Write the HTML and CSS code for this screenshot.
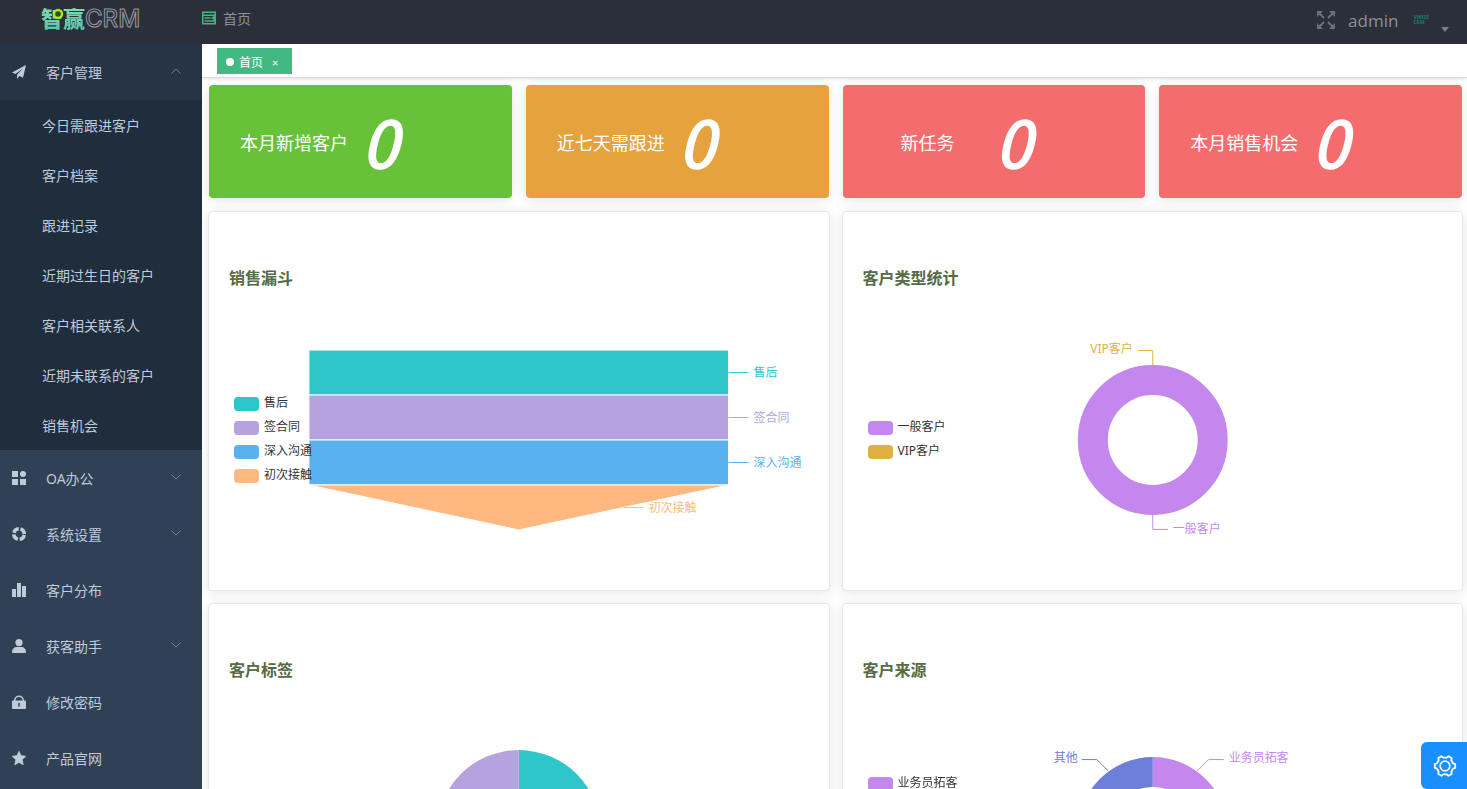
FILE: index.html
```html
<!DOCTYPE html>
<html lang="zh-CN">
<head>
<meta charset="utf-8">
<title>智赢CRM</title>
<link rel="stylesheet" href="styles.css">
</head>
<body>
<div class="app">
  <header class="topbar">
    <a class="logo" href="#"><span class="logo-name">智赢</span><span class="logo-crm">CRM</span>
      <svg class="logo-ring" viewBox="0 0 12 12"><circle cx="6" cy="6" r="4" fill="#2b4a2c" stroke="#a4ec1a" stroke-width="2.400"/></svg>
    </a>
    <nav class="crumbs">
      <button class="icon-btn" aria-label="折叠菜单">
        <svg width="14" height="14" viewBox="0 0 14 14" fill="none" stroke="#42b983" stroke-width="1.500"><path d="M.8 1.300h12.400v11.400H.8zM1 4.300h12M2.500 7h6M2.500 10h12M2.500 4.300h11"/><path d="M12.500 5 9.500 7l3 2z" fill="#42b983" stroke-width=".6"/></svg>
      </button>
      <a class="crumb" href="#">首页</a>
    </nav>
    <div class="user">
      <button class="icon-btn" aria-label="全屏">
        <svg width="20" height="20" viewBox="0 0 20 20" fill="#6d7077" stroke="#6d7077" stroke-width="2"><path d="M3 3l5 5M17 3l-5 5M3 17l5-5M17 17l-5-5"/><path stroke="none" d="M1 1h6L1 7zM19 1h-6l6 6zM1 19h6l-6-6zM19 19h-6l6-6z"/></svg>
      </button>
      <span class="user-name">admin</span>
      <span class="avatar"><b>VWISE</b><b>CRM</b></span>
      <svg class="caret" width="8" height="5" viewBox="0 0 8 5" fill="#7b7e85"><path d="M0 0h8L4 5z"/></svg>
    </div>
  </header>

  <aside class="sidebar">
    <a class="item item-open" href="#">
      <svg class="ico" viewBox="0 0 14 14"><path d="M14 0 0 7.600l3.600 1.500L11 3.200 5 9.800V14l2.300-2.900 3.700 1.600z"/></svg>
      <span>客户管理</span>
      <svg class="chev" viewBox="0 0 12 8"><path d="M1.500 6.500 6 2l4.500 4.500"/></svg>
    </a>
    <div class="submenu">
      <a href="#">今日需跟进客户</a>
      <a href="#">客户档案</a>
      <a href="#">跟进记录</a>
      <a href="#">近期过生日的客户</a>
      <a href="#">客户相关联系人</a>
      <a href="#">近期未联系的客户</a>
      <a href="#">销售机会</a>
    </div>
    <a class="item" href="#">
      <svg class="ico" viewBox="0 0 14 14"><path d="M0 0h6v6H0zM0 8h6v6H0zM8 8h6v6H8z"/><circle cx="11" cy="3" r="3"/></svg>
      <span>OA办公</span>
      <svg class="chev" viewBox="0 0 12 8"><path d="M1.500 1.500 6 6l4.500-4.500"/></svg>
    </a>
    <a class="item" href="#">
      <svg class="ico" viewBox="0 0 14 14"><circle cx="7" cy="7" r="5.300" fill="none" stroke="#bfcbd9" stroke-width="3.400" stroke-dasharray="6.530 1.800" stroke-dashoffset="-.9"/></svg>
      <span>系统设置</span>
      <svg class="chev" viewBox="0 0 12 8"><path d="M1.500 1.500 6 6l4.500-4.500"/></svg>
    </a>
    <a class="item" href="#">
      <svg class="ico" viewBox="0 0 14 14"><path d="M0 6h4v8H0zM5 0h4v14H5zM10 3h4v11h-4z"/></svg>
      <span>客户分布</span>
    </a>
    <a class="item" href="#">
      <svg class="ico" viewBox="0 0 14 14"><circle cx="7" cy="3.600" r="3.600"/><path d="M0 13c0-3 2-5 4.500-5h5c2.500 0 4.500 2 4.500 5 0 .7-.3 1-1 1H1c-.7 0-1-.3-1-1z"/></svg>
      <span>获客助手</span>
      <svg class="chev" viewBox="0 0 12 8"><path d="M1.500 1.500 6 6l4.500-4.500"/></svg>
    </a>
    <a class="item" href="#">
      <svg class="ico" viewBox="0 0 14 14"><path fill-rule="evenodd" d="M2 5.500a5 5 0 0 1 10 0h.8c.7 0 1.200.5 1.200 1.200v6c0 .8-.5 1.300-1.200 1.300H1.200C.5 14 0 13.500 0 12.700v-6c0-.7.500-1.200 1.200-1.200zm1.500 0h7a3.500 3.500 0 0 0-7 0zM6.300 8v3.500h1.500V8z"/></svg>
      <span>修改密码</span>
    </a>
    <a class="item" href="#">
      <svg class="ico" viewBox="0 0 14 14"><path d="m7 0 2.100 4.500 4.900.7-3.600 3.400.9 5.400L7 11.500 2.700 14l.9-5.400L0 5.200l4.900-.7z" stroke="#bfcbd9" stroke-width=".5" stroke-linejoin="round"/></svg>
      <span>产品官网</span>
    </a>
  </aside>

  <main class="main">
    <div class="tabs">
      <a class="tab" href="#"><i class="dot"></i>首页<span class="close">×</span></a>
    </div>

    <section class="stats">
      <div class="stat stat-green"><span class="stat-label">本月新增客户</span><em class="stat-num">0</em></div>
      <div class="stat stat-orange"><span class="stat-label">近七天需跟进</span><em class="stat-num">0</em></div>
      <div class="stat stat-red"><span class="stat-label">新任务</span><em class="stat-num">0</em></div>
      <div class="stat stat-red"><span class="stat-label">本月销售机会</span><em class="stat-num">0</em></div>
    </section>

    <section class="panels">
      <article class="panel">
        <h2>销售漏斗</h2>
        <div class="chart">
          <svg class="plot" viewBox="0 0 620 300">
            <g stroke="#fff">
              <path fill="#2ec7c9" d="M100 60h420v45H100z"/>
              <path fill="#b6a2de" d="M100 105h420v45H100z"/>
              <path fill="#5ab1ef" d="M100 150h420v45H100z"/>
              <path fill="#ffb980" d="M100 195h420L310 240z"/>
            </g>
            <path stroke="#2ec7c9" d="M520 82.500h20"/>
            <path stroke="#b6a2de" d="M520 127.500h20"/>
            <path stroke="#5ab1ef" d="M520 172.500h20"/>
            <path stroke="#ffb980" d="M415 217.500h20"/>
            <text x="545" y="87" fill="#2ec7c9">售后</text>
            <text x="545" y="132" fill="#b6a2de">签合同</text>
            <text x="545" y="177" fill="#5ab1ef">深入沟通</text>
            <text x="440" y="222" fill="#ffb980">初次接触</text>
          </svg>
          <ul class="legend">
            <li><i class="teal"></i>售后</li>
            <li><i class="lilac"></i>签合同</li>
            <li><i class="blue"></i>深入沟通</li>
            <li><i class="peach"></i>初次接触</li>
          </ul>
        </div>
      </article>

      <article class="panel">
        <h2>客户类型统计</h2>
        <div class="chart">
          <svg class="plot" viewBox="0 0 620 300">
            <circle cx="310" cy="150" r="60" fill="none" stroke="#c487ee" stroke-width="30"/>
            <path stroke="#deb140" d="M310 75V60.500H295"/>
            <path stroke="#c487ee" d="M310 225v14.500H325"/>
            <text x="290" y="63" text-anchor="end" fill="#deb140">VIP客户</text>
            <text x="330" y="243" fill="#c487ee">一般客户</text>
          </svg>
          <ul class="legend">
            <li><i class="violet"></i>一般客户</li>
            <li><i class="gold"></i>VIP客户</li>
          </ul>
        </div>
      </article>

      <article class="panel">
        <h2>客户标签</h2>
        <div class="chart">
          <svg class="plot" viewBox="0 0 620 300">
            <path fill="#2ec7c9" d="M310 150V68a82 82 0 0 1 0 164z"/>
            <path fill="#b6a2de" d="M310 150V68a82 82 0 0 0 0 164z"/>
          </svg>
        </div>
      </article>

      <article class="panel">
        <h2>客户来源</h2>
        <div class="chart">
          <svg class="plot" viewBox="0 0 620 300">
            <path fill="#c487ee" d="M310 75a75 75 0 0 1 0 150v-30a45 45 0 0 0 0-90z"/>
            <path fill="#6d80d9" d="M310 75a75 75 0 0 0 0 150v-30a45 45 0 0 1 0-90z"/>
            <path stroke="#6d80d9" d="M239 77.500h15l12 12"/>
            <path stroke="#c487ee" d="M381 77.500h-15l-12 12"/>
            <text x="235" y="80" text-anchor="end" fill="#6d80d9">其他</text>
            <text x="386" y="80" fill="#c487ee">业务员拓客</text>
          </svg>
          <ul class="legend legend-top">
            <li><i class="violet"></i>业务员拓客</li>
          </ul>
        </div>
      </article>
    </section>
  </main>

  <button class="settings" aria-label="设置">
    <svg width="24" height="24" viewBox="0 0 24 24" fill="none" stroke="#fff" stroke-width="1.800" stroke-linejoin="round"><path d="M8.500 2.200 10.200 3.600h3.600l1.700-1.400 3.200 1.900-.4 2.200 1.700 3 2.200.8v3.800l-2.200.8-1.700 3 .4 2.200-3.200 1.900-1.700-1.400h-3.600l-1.700 1.400-3.200-1.900.4-2.200-1.700-3-2.200-.8v-3.800l2.200-.8 1.700-3-.4-2.200z"/><circle cx="12" cy="12" r="4.800"/></svg>
  </button>
</div>
</body>
</html>
```
FILE: styles.css
```css
* { box-sizing: border-box; }
body {
  margin: 0;
  font-family: "Noto Sans", "Noto Sans CJK SC", sans-serif;
  font-size: 14px;
  color: #333;
  background: #fff;
}
a { color: inherit; text-decoration: none; }
svg { display: block; }
ul { list-style: none; margin: 0; padding: 0; }

.app {
  display: grid;
  grid-template: 44px 1fr / 202px 1fr;
  height: 100vh;
  overflow: hidden;
}

/* top bar */
.topbar {
  grid-column: 1 / -1;
  display: flex;
  align-items: center;
  background: #2b2f3a;
  color: #8e9096;
}
.logo {
  position: relative;
  display: flex;
  align-items: center;
  width: 202px;
  height: 36px;
  align-self: flex-start;
  padding-left: 41px;
  line-height: 36px;
}
.logo-name {
  font-size: 22px;
  font-weight: 900;
  background: linear-gradient(#8fe3b0, #4cc0a8);
  background-clip: text;
  -webkit-background-clip: text;
  color: transparent;
}
.logo-crm {
  padding-top: 2px;
  font-family: Inter, sans-serif;
  font-size: 24px;
  font-weight: 500;
  color: transparent;
  -webkit-text-stroke: 1px #989aa0;
}
.logo-ring {
  position: absolute;
  left: 52px;
  top: 8px;
  width: 12px;
  height: 12px;
}
.crumbs {
  display: flex;
  align-items: center;
  gap: 7px;
  height: 36px;
  align-self: flex-start;
}
.icon-btn {
  padding: 0;
  border: 0;
  background: none;
}
.user {
  display: flex;
  align-items: center;
  margin-left: auto;
  height: 40px;
  align-self: flex-start;
  padding-right: 18px;
}
.user-name { margin: 0 15px 0 12px; font-family: "Open Sans", sans-serif; font-size: 17px; }
.avatar {
  display: grid;
  font-size: 5px;
  line-height: 5px;
  color: #1d7a68;
}
.caret { align-self: flex-end; margin: 0 0 8px 12px; }

/* side menu */
.sidebar { background: #304156; color: #bfcbd9; overflow: hidden; }
.item {
  display: flex;
  align-items: center;
  height: 56px;
  padding: 0 20px 0 12px;
}
.item span { margin-left: 20px; }
.item-open { background: #263445; }
.ico { width: 14px; height: 14px; fill: #bfcbd9; }
.chev {
  width: 12px;
  height: 8px;
  margin-left: auto;
  margin-bottom: 2px;
  fill: none;
  stroke: #71808f;
}
.submenu { background: #1f2d3d; }
.submenu a {
  display: block;
  height: 50px;
  line-height: 52px;
  padding-left: 42px;
}

/* page */
.main { min-width: 0; overflow: hidden; }
.tabs {
  display: flex;
  height: 34px;
  padding: 4px 15px;
  border-bottom: 1px solid #d8dce5;
  box-shadow: 0 1px 3px rgba(0, 0, 0, .12);
}
.tab {
  display: flex;
  align-items: center;
  height: 26px;
  padding: 2px 14px 0 9px;
  background: #42b983;
  color: #fff;
  font-size: 12px;
}
.dot {
  width: 8px;
  height: 8px;
  margin-right: 5px;
  border-radius: 50%;
  background: #fff;
}
.close { margin-left: 9px; font-size: 11px; }

.stats {
  display: grid;
  grid-template-columns: repeat(4, 1fr);
  gap: 14px;
  padding: 7px 5px 0 7px;
}
.stat {
  display: flex;
  align-items: center;
  height: 113px;
  padding-left: 31px;
  border-radius: 4px;
  color: #fff;
  box-shadow: 0 2px 12px rgba(0, 0, 0, .1);
}
.stat-green { background: #67c23a; }
.stat-orange { background: #e6a23c; }
.stat-red { background: #f56c6c; }
.stat-label { width: 108px; font-size: 18px; text-align: center; white-space: nowrap; }
.stat-num {
  margin-left: 14px;
  padding-bottom: 4px;
  font-family: "Noto Sans CJK SC", sans-serif;
  font-size: 64px;
  line-height: 80px;
  -webkit-text-stroke: 2px #fff;
}

.panels {
  display: grid;
  grid-template-columns: repeat(2, 1fr);
  gap: 12px;
  padding: 13px 4px 12px 6px;
}
.panel {
  border: 1px solid #e6e8ee;
  border-radius: 4px;
  background: #fff;
  box-shadow: 0 2px 12px rgba(0, 0, 0, .1);
}
.panel h2 {
  margin: 0;
  padding: 54px 20px 0;
  font-size: 16px;
  line-height: 24px;
  color: #556b45;
}
.chart { display: grid; align-items: center; }
.chart > * { grid-area: 1 / 1; }
.plot { width: 100%; height: 300px; fill: none; font-size: 12px; }
.legend { z-index: 1; padding-left: 25px; font-size: 12px; line-height: 14px; }
.legend-top { align-self: start; padding-top: 90px; }
.legend li { display: flex; align-items: center; gap: 5px; height: 24px; padding-bottom: 2px; }
.legend i { width: 25px; height: 14px; margin-top: 2px; border-radius: 4px; }
.teal { background: #2ec7c9; }
.lilac { background: #b6a2de; }
.blue { background: #5ab1ef; }
.peach { background: #ffb980; }
.violet { background: #c487ee; }
.gold { background: #deb140; }

.settings {
  position: fixed;
  right: 0;
  bottom: 0;
  display: grid;
  place-items: center;
  width: 46px;
  height: 47px;
  padding: 0 0 0 2px;
  border: 0;
  border-radius: 6px 0 0 6px;
  background: #1890ff;
}
```
